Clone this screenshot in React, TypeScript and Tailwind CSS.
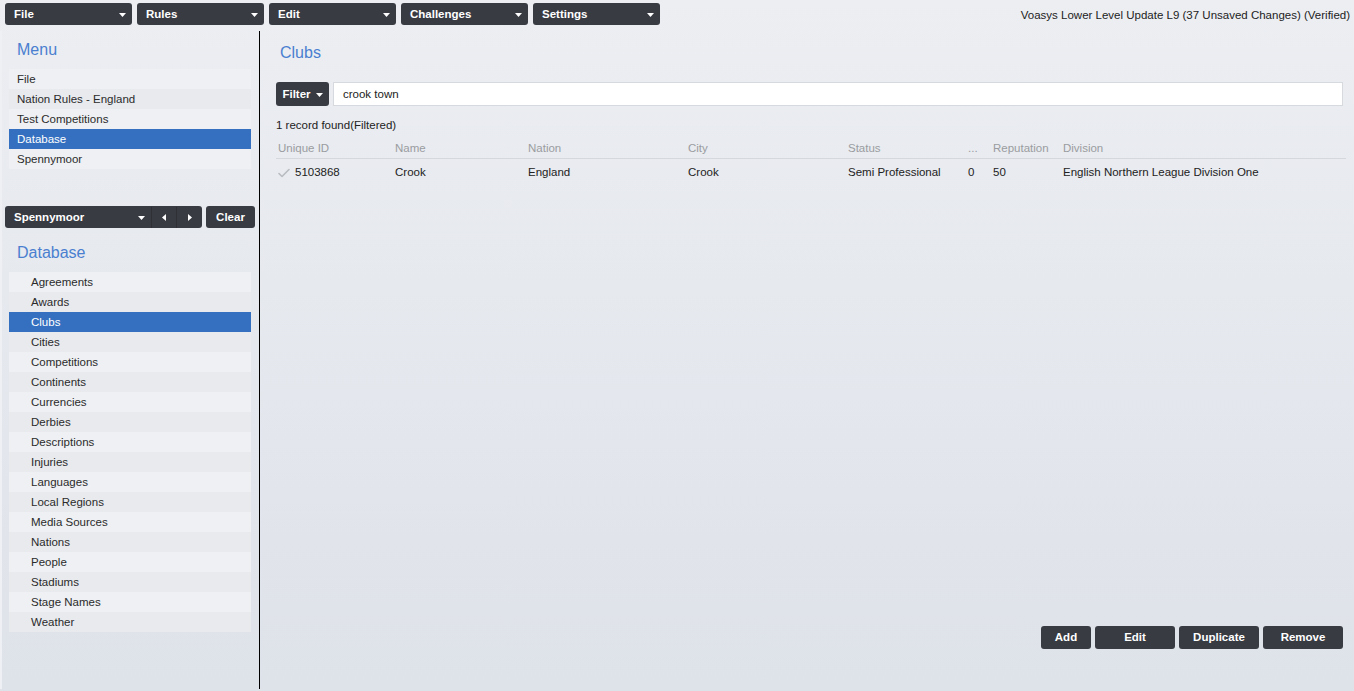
import React from 'react'

const menuItems = ['File', 'Nation Rules - England', 'Test Competitions', 'Database', 'Spennymoor']

const dbItems = [
  'Agreements', 'Awards', 'Clubs', 'Cities', 'Competitions', 'Continents', 'Currencies', 'Derbies',
  'Descriptions', 'Injuries', 'Languages', 'Local Regions', 'Media Sources', 'Nations', 'People',
  'Stadiums', 'Stage Names', 'Weather',
]

const topMenus = ['File', 'Rules', 'Edit', 'Challenges', 'Settings']

function CaretDown() {
  return (
    <svg width="7" height="4" viewBox="0 0 7 4" className="shrink-0">
      <path d="M0 0h7L3.5 4z" fill="#ffffff" />
    </svg>
  )
}

function CaretSide({ dir }: { dir: 'left' | 'right' }) {
  return (
    <svg width="4" height="7" viewBox="0 0 4 7">
      <path d={dir === 'left' ? 'M4 0v7L0 3.5z' : 'M0 0v7l4-3.5z'} fill="#ffffff" />
    </svg>
  )
}

function ListBlock({ items, active, indent }: { items: string[]; active: string; indent?: boolean }) {
  return (
    <div className="ml-[7px] w-[242px]">
      {items.map((it, i) => (
        <div
          key={it}
          className={
            'h-5 flex items-center pt-px text-[11.5px] ' +
            (indent ? 'pl-[22px] ' : 'pl-2 ') +
            (it === active
              ? 'bg-[#3570c0] text-white'
              : i % 2 === 0
              ? 'bg-[#eef0f3] text-[#2b2b2b]'
              : 'bg-[#e8eaee] text-[#2b2b2b]')
          }
        >
          {it}
        </div>
      ))}
    </div>
  )
}

const cols = [
  { label: 'Unique ID', w: 'w-[117px]' },
  { label: 'Name', w: 'w-[133px]' },
  { label: 'Nation', w: 'w-[160px]' },
  { label: 'City', w: 'w-[160px]' },
  { label: 'Status', w: 'w-[120px]' },
  { label: '...', w: 'w-[25px]' },
  { label: 'Reputation', w: 'w-[70px]' },
  { label: 'Division', w: 'flex-1' },
]

const btn = 'rounded-[3px] bg-[#383b42] text-white text-[11.5px] font-bold pt-px'

export default function App() {
  return (
    <div
      className="h-screen w-full flex flex-col bg-gradient-to-b from-[#eceef2] to-[#dee2e9] text-[#2b2b2b] overflow-hidden"
      style={{ fontFamily: '"Liberation Sans", Arial, sans-serif' }}
    >
      {/* top bar */}
      <div className="h-[31px] flex items-start pt-[3px] pl-[5px] pr-1 shrink-0">
        <div className="flex gap-[5px]">
          {topMenus.map((m) => (
            <button
              key={m}
              className={btn + ' w-[127px] h-[22px] flex items-center justify-between pl-[9px] pr-[6px]'}
            >
              <span>{m}</span>
              <CaretDown />
            </button>
          ))}
        </div>
        <div className="ml-auto text-[11.5px] leading-[22px] pt-px text-[#222]">
          Voasys Lower Level Update L9 (37 Unsaved Changes) (Verified)
        </div>
      </div>

      <div className="flex flex-1 min-h-0 pb-[2px]">
        {/* sidebar */}
        <div className="w-[260px] shrink-0 border-r border-black border-l-2 border-l-[#eef0f4]">
          <div className="pt-[9px] h-[38px] pl-[15px] text-[16px] leading-5 text-[#4a7fd0]">Menu</div>
          <ListBlock items={menuItems} active="Database" />

          <div className="mt-[37px] pl-[3px] flex gap-1">
            <div className={btn + ' w-[197px] h-[22px] flex'}>
              <div className="flex-1 flex items-center justify-between pl-[9px] pr-[6px] border-r border-[#2e3036]">
                <span>Spennymoor</span>
                <CaretDown />
              </div>
              <div className="w-[25px] flex items-center justify-center border-r border-[#2e3036]">
                <CaretSide dir="left" />
              </div>
              <div className="w-[25px] flex items-center justify-center">
                <CaretSide dir="right" />
              </div>
            </div>
            <button className={btn + ' w-[49px] h-[22px]'}>Clear</button>
          </div>

          <div className="pt-[15px] h-[44px] pl-[15px] text-[16px] leading-5 text-[#4a7fd0]">Database</div>
          <ListBlock items={dbItems} active="Clubs" indent />
        </div>

        {/* main */}
        <div className="flex-1 flex flex-col pl-[16px] pr-[11px] min-w-0">
          <div className="pt-[12px] pl-1 text-[16px] leading-5 text-[#4a7fd0]">Clubs</div>

          <div className="mt-[19px] flex gap-1 h-6">
            <button className={btn + ' w-[53px] h-6 flex items-center justify-center gap-[5px]'}>
              <span>Filter</span>
              <CaretDown />
            </button>
            <div className="flex-1 h-6 bg-white border border-[#d6d9de] flex items-center pt-px px-[9px] text-[11.5px] text-[#222]">
              crook town
            </div>
          </div>

          <div className="mt-[12px] text-[11.5px] leading-[14px] text-[#222]">1 record found(Filtered)</div>

          <div className="mt-[6px] mr-[-3px]">
            <div className="flex h-[21px] items-center pt-px border-b border-[#d5d8dd] pl-[2px] text-[11.5px] text-[#9a9ca0]">
              {cols.map((c) => (
                <div key={c.label} className={c.w + ' shrink-0'}>
                  {c.label}
                </div>
              ))}
            </div>
            <div className="flex h-[26px] items-center pt-px pl-[2px] text-[11.5px] text-[#222]">
              <div className="w-[117px] shrink-0 flex items-center gap-[5px]">
                <svg width="12" height="10" viewBox="0 0 12 10">
                  <path d="M1 5.5 4 8.5 11 1.5" fill="none" stroke="#b9bcc1" strokeWidth="1.6" strokeLinecap="round" strokeLinejoin="round" />
                </svg>
                <span>5103868</span>
              </div>
              <div className="w-[133px] shrink-0">Crook</div>
              <div className="w-[160px] shrink-0">England</div>
              <div className="w-[160px] shrink-0">Crook</div>
              <div className="w-[120px] shrink-0">Semi Professional</div>
              <div className="w-[25px] shrink-0">0</div>
              <div className="w-[70px] shrink-0">50</div>
              <div className="flex-1">English Northern League Division One</div>
            </div>
          </div>

          <div className="flex-1" />

          <div className="flex justify-end gap-1 mb-[40px]">
            <button className={btn + ' w-[50px] h-[23px]'}>Add</button>
            <button className={btn + ' w-[80px] h-[23px]'}>Edit</button>
            <button className={btn + ' w-[80px] h-[23px]'}>Duplicate</button>
            <button className={btn + ' w-[80px] h-[23px]'}>Remove</button>
          </div>
        </div>
      </div>
    </div>
  )
}
